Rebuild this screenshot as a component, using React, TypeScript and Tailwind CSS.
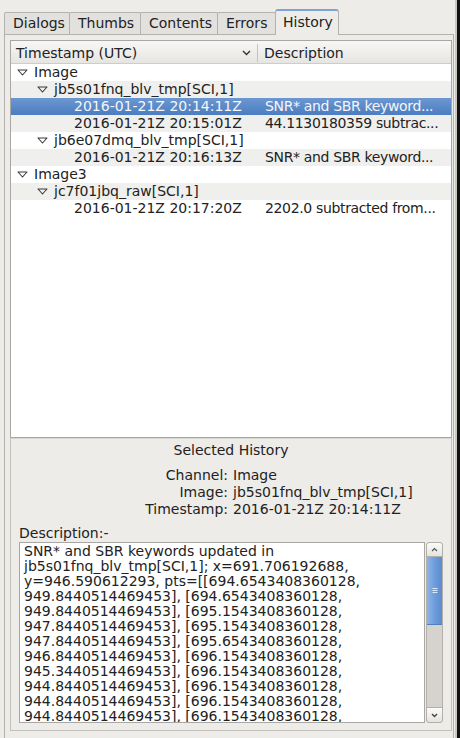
import React from 'react'

type Row = {
  depth: number
  label: string
  desc?: string
  toggle?: boolean
  selected?: boolean
}

const rows: Row[] = [
  { depth: 0, label: 'Image', toggle: true },
  { depth: 1, label: 'jb5s01fnq_blv_tmp[SCI,1]', toggle: true },
  { depth: 2, label: '2016-01-21Z 20:14:11Z', desc: 'SNR* and SBR keyword...', selected: true },
  { depth: 2, label: '2016-01-21Z 20:15:01Z', desc: '44.1130180359 subtrac...' },
  { depth: 1, label: 'jb6e07dmq_blv_tmp[SCI,1]', toggle: true },
  { depth: 2, label: '2016-01-21Z 20:16:13Z', desc: 'SNR* and SBR keyword...' },
  { depth: 0, label: 'Image3', toggle: true },
  { depth: 1, label: 'jc7f01jbq_raw[SCI,1]', toggle: true },
  { depth: 2, label: '2016-01-21Z 20:17:20Z', desc: '2202.0 subtracted from...' },
]

const descLines = [
  'SNR* and SBR keywords updated in',
  'jb5s01fnq_blv_tmp[SCI,1]; x=691.706192688,',
  'y=946.590612293, pts=[[694.6543408360128,',
  '949.8440514469453], [694.6543408360128,',
  '949.8440514469453], [695.1543408360128,',
  '947.8440514469453], [695.1543408360128,',
  '947.8440514469453], [695.6543408360128,',
  '946.8440514469453], [696.1543408360128,',
  '945.3440514469453], [696.1543408360128,',
  '944.8440514469453], [696.1543408360128,',
  '944.8440514469453], [696.1543408360128,',
  '944.8440514469453], [696.1543408360128,',
]

const tabs = [
  { name: 'Dialogs', w: 'w-[66px]' },
  { name: 'Thumbs', w: 'w-[72px]' },
  { name: 'Contents', w: 'w-[78px]' },
  { name: 'Errors', w: 'w-[59px]' },
]

function Triangle() {
  return (
    <svg width="11" height="7" viewBox="0 0 11 7" className="shrink-0">
      <polygon points="1,1 10,1 5.5,6" fill="none" stroke="#3a3a3a" strokeWidth="1.1" strokeLinejoin="round" />
    </svg>
  )
}

export default function App() {
  return (
    <div className="w-[460px] h-[738px] flex bg-[#edece9] text-[14px] text-[#222] font-['DejaVu_Sans',sans-serif] overflow-hidden">
      <div className="w-[455px] flex flex-col pl-[4px] pt-[8px] pr-px">
        {/* Tabs */}
        <div className="flex items-end h-[26px]">
          {tabs.map((t) => (
            <div
              key={t.name}
              className={`${t.w} h-[22px] flex items-center pl-[8px] border border-b-0 border-[#b4b2ad] -mr-px bg-[#e2e1dd] rounded-t-[2px]`}
            >
              {t.name}
            </div>
          ))}
          <div className="w-[64px] h-[26px] flex items-center pl-[7px] pb-[2px] bg-[#edece9] border border-b-0 border-[#b4b2ad] border-t-2 border-t-[#7ea3d4] rounded-t-[3px] relative z-10 -mb-px">
            History
          </div>
        </div>

        {/* Pane */}
        <div className="flex-1 border border-[#b4b2ad] border-b-0 pl-[5px] pt-[5px] pr-px flex flex-col">
          {/* Tree */}
          <div className="h-[398px] border border-[#a9a7a3] bg-white flex flex-col">
            <div className="h-[23px] pt-[2px] flex items-center bg-gradient-to-b from-[#f7f7f6] to-[#e6e5e1] border-b border-[#cfcdc8]">
              <div className="w-[247px] flex items-center pl-[5px] border-r border-[#c4c2bd] h-[18px]">
                <span className="flex-1">Timestamp (UTC)</span>
                <svg width="9" height="6" viewBox="0 0 9 6" className="mr-[6px]">
                  <polyline points="1,1 4.5,4.5 8,1" fill="none" stroke="#333" strokeWidth="1.4" />
                </svg>
              </div>
              <div className="pl-[6px]">Description</div>
            </div>
            <div>
              {rows.map((r, i) => (
                <div
                  key={i}
                  className={`h-[17px] flex items-center whitespace-nowrap overflow-hidden ${
                    r.selected
                      ? 'bg-gradient-to-b from-[#6c97d1] to-[#4c7dc0] text-[#f4f6fa]'
                      : i % 2 === 1
                      ? 'bg-[#efefed]'
                      : 'bg-white'
                  }`}
                >
                  <div className="w-[248px] shrink-0 flex items-center overflow-hidden">
                    {r.toggle ? (
                      <div
                        className={`flex items-center gap-[6px] ${
                          r.depth === 0 ? 'pl-[6px]' : 'pl-[26px]'
                        }`}
                      >
                        <Triangle />
                        <span>{r.label}</span>
                      </div>
                    ) : (
                      <span className="pl-[63px]">{r.label}</span>
                    )}
                  </div>
                  <div className="pl-[6px] tracking-[-0.35px]">{r.desc}</div>
                </div>
              ))}
            </div>
          </div>

          {/* Selected history panel */}
          <div className="h-[293px] border border-[#c2c0bb] border-t-[#d8d6d1] flex flex-col px-[8px]">
            <div className="h-[20px] mt-[1px] flex items-center justify-center">Selected History</div>
            <div className="mt-[7px] grid grid-cols-[209px_1fr] gap-x-[5px] leading-[17px]">
              <span className="text-right">Channel:</span>
              <span>Image</span>
              <span className="text-right">Image:</span>
              <span>jb5s01fnq_blv_tmp[SCI,1]</span>
              <span className="text-right">Timestamp:</span>
              <span>2016-01-21Z 20:14:11Z</span>
            </div>
            <div className="mt-[6px] h-[18px] flex items-center">Description:-</div>
            <div className="h-[181px] flex">
              <div className="w-[406px] border border-[#a9a7a3] bg-white pl-[4px] pt-px overflow-hidden leading-[15px] whitespace-pre">
                {descLines.map((l, i) => (
                  <div key={i}>{l}</div>
                ))}
              </div>
              <div className="w-[17px] ml-px flex flex-col bg-[#d6d3ce] border border-[#b3b0aa] rounded-[3px]">
                <div className="h-[14px] flex items-center justify-center bg-gradient-to-b from-[#fbfbfa] to-[#e4e3df] rounded-t-[3px] border-b border-[#b3b0aa]">
                  <svg width="7" height="5" viewBox="0 0 7 5">
                    <polyline points="1,4 3.5,1.5 6,4" fill="none" stroke="#555" strokeWidth="1.2" />
                  </svg>
                </div>
                <div className="h-[68px] bg-gradient-to-r from-[#8fb4e6] via-[#6f9ddb] to-[#5b8bd0] border-b border-[#4f7fc0] flex items-center justify-center">
                  <svg width="6" height="7" viewBox="0 0 6 7">
                    <path d="M0.5 1.5H5.5M0.5 3.5H5.5M0.5 5.5H5.5" stroke="#dfe9f7" strokeWidth="1" />
                  </svg>
                </div>
                <div className="flex-1" />
                <div className="h-[15px] flex items-center justify-center bg-gradient-to-b from-[#fbfbfa] to-[#e4e3df] rounded-b-[3px] border-t border-[#b3b0aa]">
                  <svg width="7" height="5" viewBox="0 0 7 5">
                    <polyline points="1,1 3.5,3.5 6,1" fill="none" stroke="#444" strokeWidth="1.4" />
                  </svg>
                </div>
              </div>
            </div>
          </div>
        </div>
      </div>
      <div className="w-[2px] bg-[#c9c7c2]" />
      <div className="flex-1 bg-[#111]" />
    </div>
  )
}
